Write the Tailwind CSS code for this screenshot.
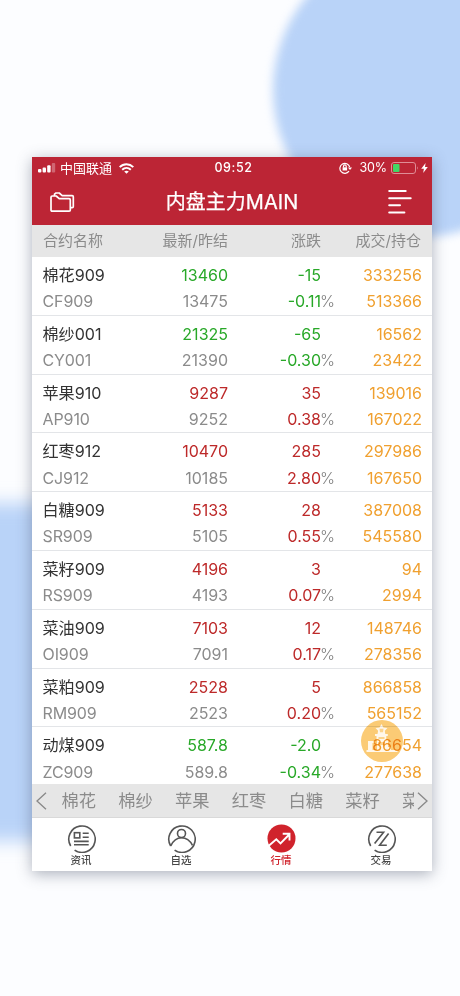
<!DOCTYPE html>
<html lang="zh-CN">
<head>
<meta charset="utf-8">
<title>内盘主力MAIN</title>
<script src="https://cdn.jsdelivr.net/npm/@tailwindcss/browser@4"></script>
</head>
<body class="font-['Inter','Noto_Sans_CJK_SC',sans-serif]">
<div class="relative isolate h-[996px] w-[460px] overflow-hidden bg-[#fcfdff]">
<div class="absolute inset-0 -z-10 overflow-hidden">
  <div class="absolute left-[273px] top-[-57px] size-[294px] rounded-full bg-[#b9d3f8] blur-[5px]"></div>
  <div class="absolute left-[-100px] top-[503px] h-[338px] w-[300px] rounded-[40px] bg-[#b9d3f8] blur-[9px]"></div>
</div>
<main class="relative ml-8 mt-[157px] flex h-[714px] w-[400px] flex-col bg-white shadow-[0_3px_14px_rgba(60,70,90,0.42)]">
  <header class="h-[68px] shrink-0 bg-[#bc2535] text-white">
    <div class="grid h-[22px] grid-cols-[1fr_60px_1fr] items-center text-[12.5px] leading-[22px]">
      <div class="flex items-center pl-[6px]">
        <svg class="h-[10px] w-[18px]" viewBox="0 0 18 10" fill="#fff"><rect y="6" width="3.4" height="3.5" rx="1"/><rect x="4.6" y="4.5" width="3.4" height="5" rx="1"/><rect x="9.2" y="2.3" width="3.4" height="7.2" rx="1"/><rect x="13.8" width="3.4" height="9.5" rx="1" opacity=".3"/></svg>
        <span class="ml-[4px] text-[13px]">中国联通</span>
        <svg class="ml-[7px] h-[11px] w-[15px]" viewBox="0 0 15 11" fill="none" stroke="#fff" stroke-width="2"><path d="M.7 4.1C4.5.3 10.5.3 14.3 4.1M3.2 6.7c2.5-2.3 6.1-2.3 8.6 0"/><path d="M5.2 8.5c1.4-1.1 3.2-1.1 4.6 0L7.5 10.8z" fill="#fff" stroke="none"/></svg>
      </div>
      <div class="pl-[3px] text-center text-[12.5px] font-medium tracking-[.6px]">09:52</div>
      <div class="flex items-center justify-end pr-[4px]">
        <svg class="mr-[7px] h-[12px] w-[13px]" viewBox="0 0 13 12" fill="none" stroke="#fff" stroke-width="1.2"><path d="M10 9.2A5 5 0 1 1 10.7 5"/><path d="M9 5.4h4l-2 2.6z" fill="#fff" stroke="none"/><path d="M4.5 5.5V4.3a1.3 1.3 0 0 1 2.7 0v1.2"/><rect x="3.6" y="5.3" width="4.5" height="3.2" fill="#fff" stroke="none"/></svg>
        <span class="text-[12.5px] tracking-[-.1px]">30%</span>
        <svg class="ml-[4px] h-[12px] w-[28px]" viewBox="0 0 28 12"><rect x=".5" y=".5" width="24" height="11" rx="2.5" fill="none" stroke="#df8d96"/><rect x="2" y="2" width="6.5" height="8" rx="1" fill="#42d765"/><path d="M26 4.2q1.8 1.8 0 3.6z" fill="#df8d96"/></svg>
        <svg class="ml-[2px] h-[10px] w-[7px]" viewBox="0 0 7 10" fill="#fff"><path d="M4.6 0 .2 5.8h2.7L2.2 10 6.8 4H4z"/></svg>
      </div>
    </div>
    <div class="flex h-[46px] items-center justify-between pl-[18px] pr-[20px]">
      <svg class="h-[22px] w-[26px]" viewBox="0 0 26 22" fill="none" stroke="#fff" stroke-width="1.7" stroke-linejoin="round"><path d="M1 19V6.2Q1 5 2.2 5H6.2L9.2 7.7h9.9q1.2 0 1.2 1.2V19q0 1.2-1.2 1.2H2.2Q1 20.2 1 19z"/><path d="M4.5 5V3.2L6 2h3.2l3 2.6h10q1.1 0 1.1 1.2v9.6q0 1.2-1.1 1.2h-1.9"/></svg>
      <h1 class="text-[20px] font-normal leading-[28px] tracking-[.05px] [-webkit-text-stroke:.25px_white]">内盘主力MAIN</h1>
      <svg class="h-[26px] w-[24px]" viewBox="0 0 24 26" stroke="#fff" stroke-width="2" stroke-linecap="round"><path d="M1.2 2h16.5M1.2 9.2h21.5M1.2 16.3h10.8M1.2 23.5h15.2"/></svg>
    </div>
  </header>
  <div class="grid h-8 shrink-0 grid-cols-[100px_96px_93px_101px] items-center bg-[#e6e6e6] pt-px text-right text-[15px] text-[#8b8b8b]">
    <span class="pl-[11px] text-left">合约名称</span><span>最新/昨结</span><span>涨跌</span><span class="pr-px">成交/持仓</span>
  </div>
  <section id="rows" class="h-[527px] shrink-0 overflow-hidden"></section>
  <div class="relative flex h-[34px] shrink-0 items-center overflow-hidden border-b border-[#d9d9d9] bg-[#e6e6e6] pl-[29.5px] text-[17.3px] text-[#8b8b8b]">
    <svg class="absolute left-[4px] top-[8px] h-[18px] w-[11px]" viewBox="0 0 11 18" fill="none" stroke="#888" stroke-width="1.3"><path d="M10 .8 1 9l9 8.2"/></svg>
    <div class="flex w-[352px] gap-[22.2px] overflow-hidden whitespace-nowrap"><span>棉花</span><span>棉纱</span><span>苹果</span><span>红枣</span><span>白糖</span><span>菜籽</span><span>菜油</span></div>
    <svg class="absolute right-[4px] top-[8px] h-[18px] w-[11px]" viewBox="0 0 11 18" fill="none" stroke="#888" stroke-width="1.3"><path d="m1 .8 9 8.2-9 8.2"/></svg>
  </div>
  <nav class="-ml-px mr-px grid grow grid-cols-4 text-[10.5px] font-medium leading-[14px] text-[#484848]">
    <div class="flex flex-col items-center pt-[6px]"><svg class="h-[29px] w-[29px]" viewBox="0 0 29 29" fill="none" stroke="#555" stroke-width="1.6"><path d="M7.6 26.1A13.2 13.2 0 1 0 3.7 22"/><rect x="7.4" y="8.7" width="5.4" height="5.2"/><path d="M15.7 9.3h6M15.7 13.2h6M7 17.4h14.7M7 20.8h14.7"/></svg><span class="mt-px">资讯</span></div>
    <div class="flex flex-col items-center pt-[6px]"><svg class="h-[29px] w-[29px]" viewBox="0 0 29 29" fill="none" stroke="#555" stroke-width="1.6"><path d="M7.6 26.1A13.2 13.2 0 1 0 3.7 22"/><circle cx="14.5" cy="9.5" r="4"/><path d="M3.7 22c2.2-4.7 6-8.2 10.8-8.2S23.2 17 25.5 21.4"/></svg><span class="mt-px">自选</span></div>
    <div class="flex flex-col items-center pt-[6px] text-[#d0232c]"><svg class="h-[29px] w-[29px]" viewBox="0 0 29 29"><circle cx="14.5" cy="14.5" r="14" fill="#d0232c"/><path d="m1.5 22 7.8-6.7 4.2 4.1 8.2-8.4M15.7 9.7h6.8v6.7" fill="none" stroke="#fff" stroke-width="1.9"/></svg><span class="mt-px">行情</span></div>
    <div class="flex flex-col items-center pt-[6px]"><svg class="h-[29px] w-[29px]" viewBox="0 0 29 29" fill="none" stroke="#555" stroke-width="1.6"><path d="M7.6 26.1A13.2 13.2 0 1 0 3.7 22"/><path d="M9.5 8.2h7.1L7.6 19.6M21.6 9.5l-9 11.7h7.2"/></svg><span class="mt-px">交易</span></div>
  </nav>
  <div class="absolute left-[329px] top-[563px] size-[42px] overflow-hidden rounded-full bg-[#fbcb75] mix-blend-multiply">
    <svg class="size-full" viewBox="0 0 42 42" fill="#fff" fill-opacity=".85"><path d="m20.5 4 1.9 3.4 4.1.6-2.7 2.8.5 3.2h2.5v2h-1.5v4H27v7h3v3h6.5v2h-31v-2h1.5V21h7v2h-2.5v7H16v-10h-.5v-4H14v-2h2.5l.6-3.2L14.5 8l4-.6z"/><path d="M18.5 8.8h4l-.5 3.4h-3zM17.5 17h6v2h-6zM17 22h7v3h-7z" fill="#fbcb75" fill-opacity=".8"/></svg>
  </div>
</main>
</div>
<script>
const GREEN = 'text-[#28a828]', RED = 'text-[#bd2929]';
const data = [
  ['棉花909','CF909','13460','13475','-15','-0.11','333256','513366'],
  ['棉纱001','CY001','21325','21390','-65','-0.30','16562','23422'],
  ['苹果910','AP910','9287','9252','35','0.38','139016','167022'],
  ['红枣912','CJ912','10470','10185','285','2.80','297986','167650'],
  ['白糖909','SR909','5133','5105','28','0.55','387008','545580'],
  ['菜籽909','RS909','4196','4193','3','0.07','94','2994'],
  ['菜油909','OI909','7103','7091','12','0.17','148746','278356'],
  ['菜粕909','RM909','2528','2523','5','0.20','866858','565152'],
  ['动煤909','ZC909','587.8','589.8','-2.0','-0.34','86654','277638']
];
document.getElementById('rows').innerHTML = data.map(d => {
  const c = d[4][0] === '-' ? GREEN : RED;
  return `<div class="grid h-[58.8px] grid-cols-[100px_96px_93px_101px] content-start border-b border-[#e3e5e8] pt-[5px] text-right text-[16px] leading-[26.3px] whitespace-nowrap">
    <span class="h-[26.3px] pl-[10.5px] text-left text-[16.1px] text-[#333]">${d[0]}</span><span class="${c}">${d[2]}</span><span class="${c}">${d[4]}</span><span class="text-[#f0a02f]">${d[6]}</span>
    <span class="pl-[10.5px] text-left text-[#8b8b8b] tracking-[-.1px]">${d[1]}</span><span class="text-[#8b8b8b]">${d[3]}</span><span class="relative ${c}">${d[5]}<i class="absolute left-full top-0 -ml-px text-[16px] font-light not-italic text-[#808080]">%</i></span><span class="text-[#f0a02f]">${d[7]}</span>
  </div>`;
}).join('');
</script>
</body>
</html>
